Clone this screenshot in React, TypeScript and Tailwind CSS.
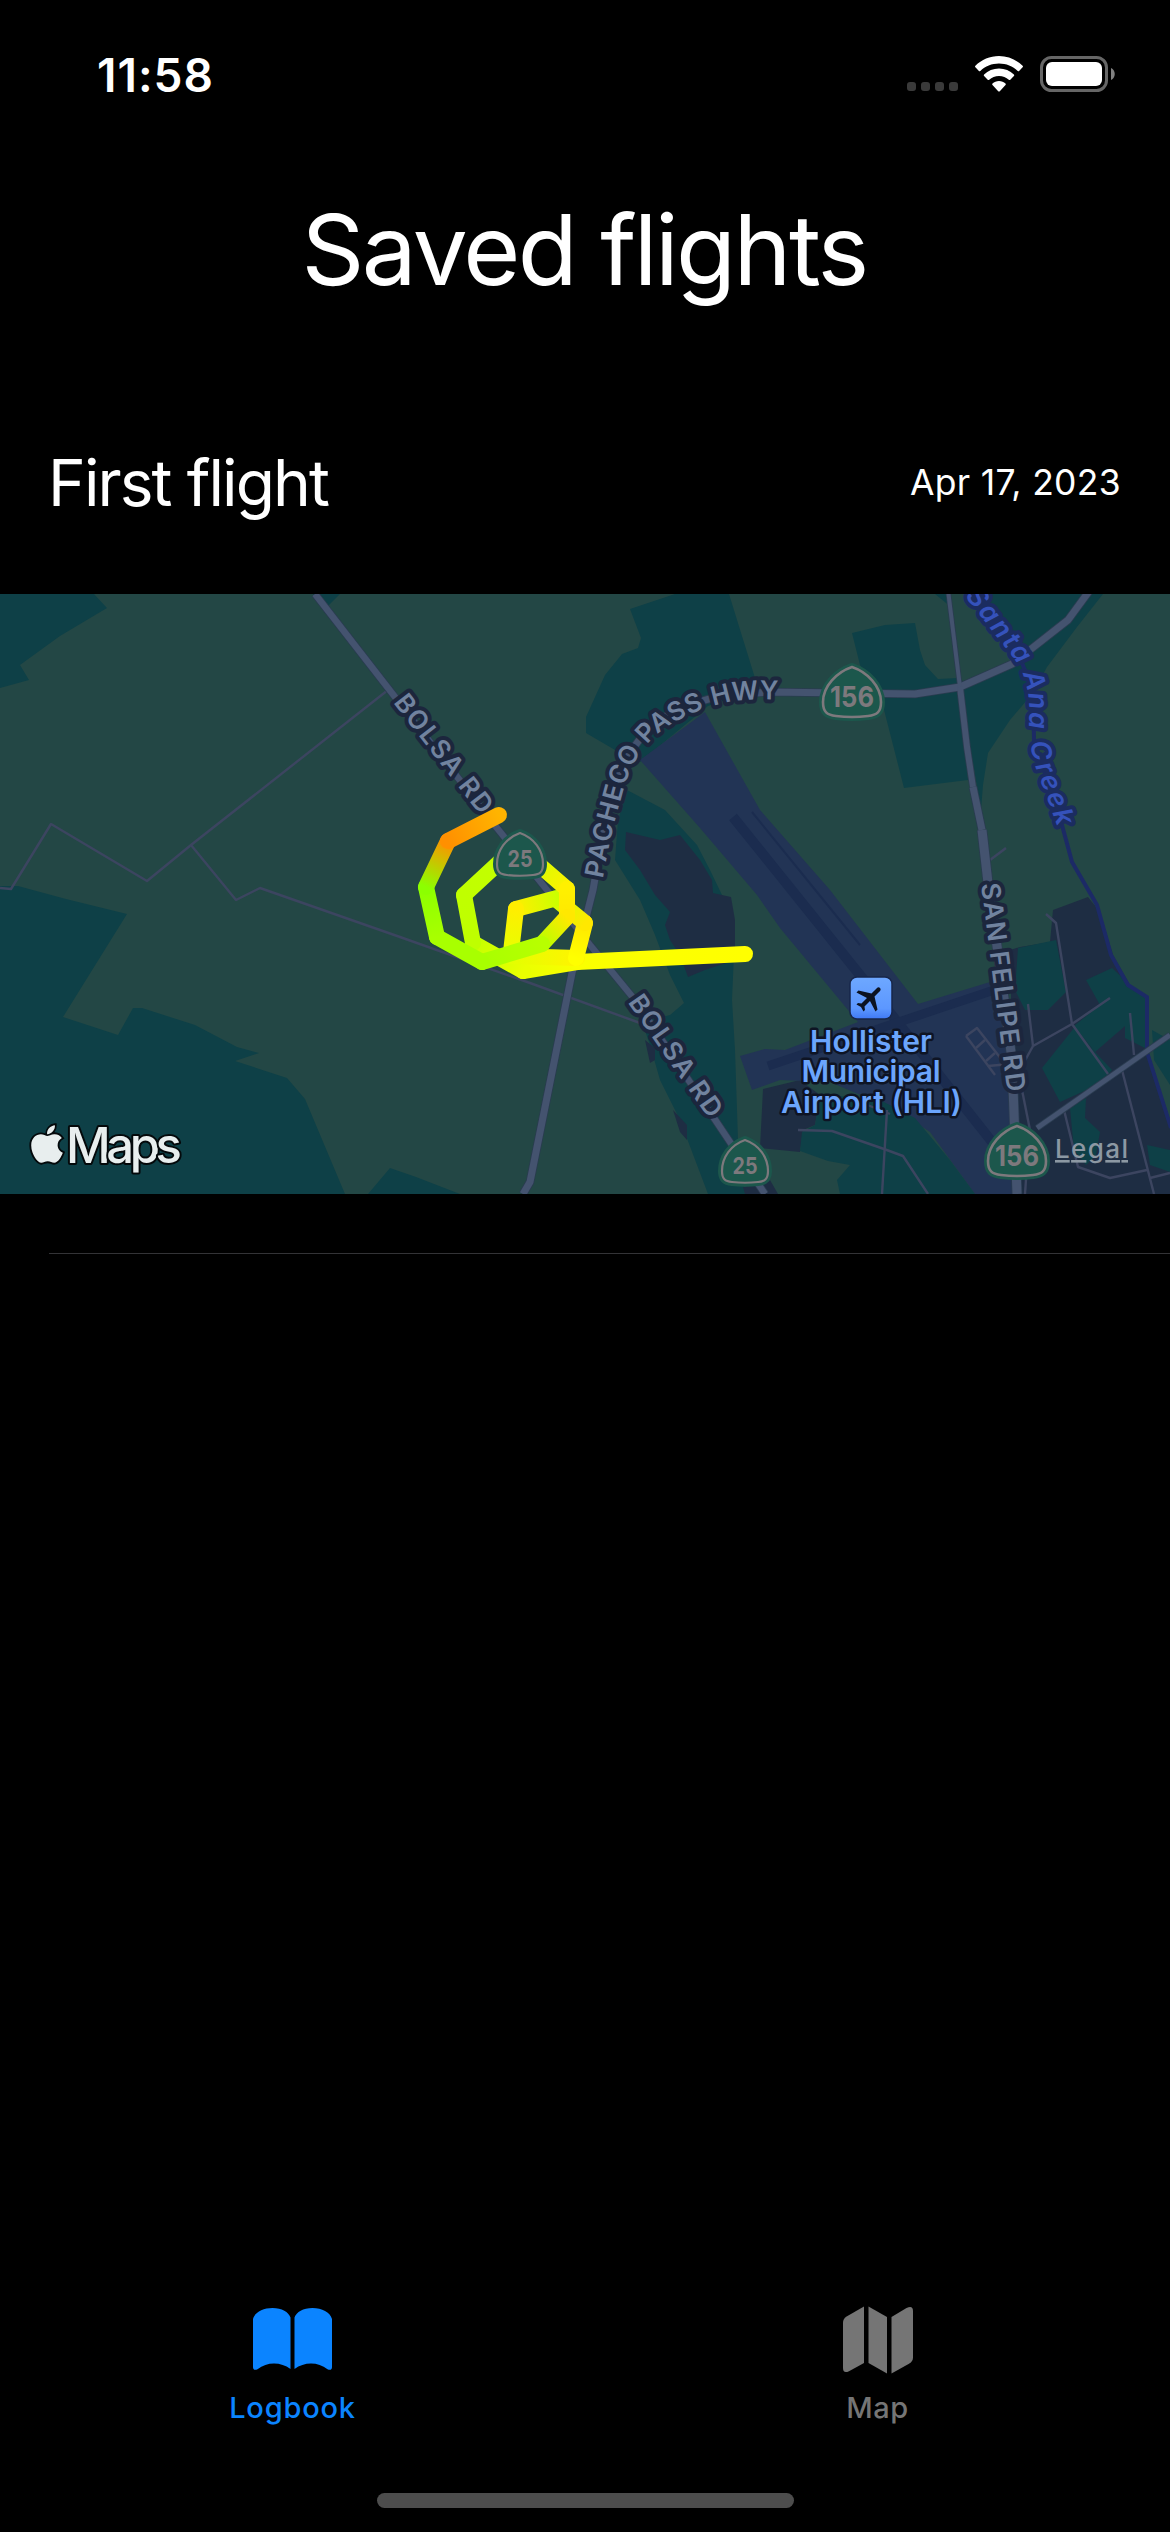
import { FaApple } from "react-icons/fa";
import { MdFlight } from "react-icons/md";

const GREEN = "#234745";
const TEAL = "#0e4047";
const NAVY = "#1e2d43";
const AIRPORT = "#223455";
const RUNWAY = "#1b2c4f";

const tealAreas = [
  "0,594 94,594 107,608 60,636 20,665 29,680 0,688",
  "0,886 18,886 66,899 127,914 63,1017 118,1035 133,1008 142,1008 195,1025 237,1047 259,1053 235,1061 287,1078 305,1099 345,1194 0,1194",
  "313,594 340,594 328,606",
  "368,1194 390,1168 416,1177 460,1194",
  "630,609 675,594 729,594 755,678 755,690 708,706 640,762 615,750 586,733 586,717 605,675 622,654 638,648 641,638",
  "627,790 665,810 697,845 710,870 722,895 735,930 732,1000 735,1050 738,1140 745,1194 708,1194 680,1120 660,1080 650,1045 642,1022 670,1015 684,1003 670,975 655,935 640,900 615,860 618,820",
  "852,633 885,625 915,623 920,650 925,665 938,679 958,678 968,780 904,788 882,702 872,690 860,665",
  "935,594 948,594 951,607",
  "968,594 1103,594 1077,627 1047,667 1033,693 1010,720 988,753 983,785 981,810 960,687 1020,662",
];

const navyAreas = [
  "626,832 660,840 680,835 700,860 712,880 713,893 731,897 735,920 735,960 705,970 688,977 680,955 670,940 665,925 670,912 655,895 640,870 625,850",
  "645,1040 655,1048 655,1060 650,1063",
  "673,1110 687,1125 687,1140 680,1132",
  "743,1187 770,1180 778,1194 745,1194",
  "763,1089 800,1080 820,1095 815,1125 803,1130 800,1152 760,1148",
  "1010,950 1020,947 1050,942 1053,910 1088,897 1100,912 1113,955 1130,985 1147,1000 1147,1050 1170,1120 1170,1194 1015,1194",
];

const tealPatches = [
  "820,1094 880,1100 915,1118 950,1160 975,1194 840,1194 837,1180 850,1165 828,1161 800,1151 802,1132 815,1125",
  "1018,948 1056,940 1066,992 1048,1010 1025,1010 1015,990",
  "1086,980 1112,968 1130,985 1147,998 1145,1048 1125,1038 1125,1026 1095,1052 1074,1026 1100,1005",
  "1074,1028 1095,1052 1112,1070 1100,1084 1060,1102 1042,1068",
  "1070,1108 1086,1098 1085,1118 1100,1132 1096,1155 1086,1165 1074,1150",
  "1152,1030 1170,1040 1170,1085 1154,1060",
  "1147,1145 1170,1150 1170,1172 1150,1165",
];

const lanes = [
  "0,888 11,889 51,824 147,881 191,845 388,690",
  "191,845 236,900 260,888 400,937 530,983 640,1023",
  "990,860 1006,848",
  "798,1130 832,1131 884,1149 903,1156 928,1194",
  "887,1110 882,1194",
  "865,1104 890,1114",
  "966,1036 977,1028 1002,1060",
  "966,1036 995,1075",
  "976,1048 985,1040",
  "986,1061 995,1053",
  "988,1066 1010,1064",
  "1046,914 1056,923 1072,1024 1110,998",
  "1072,1024 1108,1074",
  "1072,1024 1033,1046 1028,1004",
  "1033,1046 1022,1066",
  "1130,1013 1134,1055",
  "1122,1070 1154,1194",
  "1064,1110 1078,1167 1110,1178 1147,1170",
  "1150,1178 1170,1173",
  "1022,1090 1030,1130",
  "1027,1165 1025,1194",
];

const roads: [string, number][] = [
  ["315,594 388,688 497,828 547,890 590,945 635,1000 730,1142 765,1194", 6.5],
  ["523,1194 530,1182 572,973 593,890 597,867 604,832 613,792 621,766 629,754 645,732 662,718 695,703 723,695 770,692 915,694 960,687 1012,664 1068,620 1090,590", 7],
  ["948,590 960,687", 4],
  ["960,687 967,747 973,787", 6],
  ["973,787 982,830", 7],
  ["982,830 988,883 999,960 1012,1060 1017,1194", 9],
  ["1037,1128 1170,1035", 5],
];

type Leg = { from: [number, number]; to: [number, number]; a: string; b: string };

const legs: Leg[] = [
  { from: [745, 954], to: [577, 962], a: "#ffff00", b: "#faff00" },
  { from: [577, 962], to: [523, 971], a: "#faff00", b: "#eaff00" },
  { from: [523, 971], to: [473, 943], a: "#eaff00", b: "#c4ff00" },
  { from: [577, 958], to: [511, 956], a: "#fff400", b: "#e4ff00" },
  { from: [576, 958], to: [585, 923], a: "#ffff00", b: "#ffe800" },
  { from: [585, 923], to: [557, 900], a: "#ffe800", b: "#d4ff00" },
  { from: [557, 898], to: [516, 909], a: "#ccff00", b: "#ffee00" },
  { from: [516, 909], to: [511, 952], a: "#ffee00", b: "#e8ff00" },
  { from: [473, 943], to: [464, 895], a: "#bfff00", b: "#c0ff00" },
  { from: [464, 895], to: [505, 857], a: "#c0ff00", b: "#c4ff00" },
  { from: [505, 857], to: [530, 857], a: "#c4ff00", b: "#ccff00" },
  { from: [530, 857], to: [567, 889], a: "#d0ff00", b: "#fff000" },
  { from: [567, 889], to: [567, 917], a: "#fff000", b: "#ffe800" },
  { from: [567, 917], to: [542, 944], a: "#ffe800", b: "#b8ff00" },
  { from: [542, 944], to: [482, 962], a: "#b8ff00", b: "#a8ff00" },
  { from: [482, 962], to: [437, 937], a: "#a8ff00", b: "#a8ff00" },
  { from: [437, 937], to: [426, 887], a: "#a8ff00", b: "#8cff00" },
  { from: [426, 887], to: [448, 841], a: "#8cff00", b: "#ff9000" },
  { from: [448, 841], to: [499, 815], a: "#ff9000", b: "#ffb400" },
];

type RoadLabel = { id: string; d: string; text: string; length: number; water?: boolean };

const roadLabels: RoadLabel[] = [
  { id: "bolsa-north", d: "M400 697L500 826", text: "BOLSA RD", length: 143 },
  { id: "bolsa-south", d: "M635 997L731 1135", text: "BOLSA RD", length: 143 },
  {
    id: "pacheco",
    d: "M594 877C599 850 605 820 612 798C619 770 627 752 646 732C666 714 690 702 723 694Q750 688 800 692",
    text: "PACHECO PASS HWY",
    length: 299,
  },
  { id: "san-felipe", d: "M990 883L1020 1120", text: "SAN FELIPE RD", length: 210 },
  {
    id: "creek",
    d: "M971 591L1012 643Q1035 668 1037 704L1037 722Q1037 745 1044 767L1073 845",
    text: "Santa Ana Creek",
    length: 258,
    water: true,
  },
];

function Shield({ x, y, wide, label }: { x: number; y: number; wide?: boolean; label: string }) {
  const d = wide
    ? "M0 -23C15 -18 29 -4 29 12C29 22 25 25 16 26Q0 28 -16 26C-25 25 -29 22 -29 12C-29 -4 -15 -18 0 -23Z"
    : "M0 -23C14 -18 23 -6 23 8C23 16 20 18.500 13 19Q0 20.500 -13 19C-20 18.500 -23 16 -23 8C-23 -6 -14 -18 0 -23Z";
  return (
    <g transform={`translate(${x} ${y})`}>
      <path d={d} fill="#1c574c" stroke="#1c574c" strokeWidth={8} strokeLinejoin="round" />
      <path d={d} fill="#1c574c" stroke="#7d797d" strokeWidth={wide ? 2.6 : 2.2} strokeLinejoin="round" />
      <text
        y={wide ? 17 : 11}
        textAnchor="middle"
        fontSize={wide ? 29 : 23.5}
        fontWeight={700}
        fill="#7d797d"
        textLength={wide ? 44 : 25}
        lengthAdjust="spacingAndGlyphs"
      >
        {label}
      </text>
    </g>
  );
}

function FlightMap() {
  return (
    <svg className="block h-[600px] w-full" viewBox="0 594 1170 600" fontFamily="Inter, sans-serif">
      <rect y={594} width={1170} height={600} fill={GREEN} />
      {tealAreas.map((p) => (
        <polygon key={p} points={p} fill={TEAL} />
      ))}
      {navyAreas.map((p) => (
        <polygon key={p} points={p} fill={NAVY} />
      ))}
      <polygon
        points="640,760 705,712 760,810 830,890 918,1004 990,982 1005,988 1022,1194 975,1194 930,1132 900,1112 830,1082 780,1080 752,1090 740,1056 765,1049 785,1050 858,1022 780,928 757,895 700,828"
        fill={AIRPORT}
      />
      {tealPatches.map((p) => (
        <polygon key={p} points={p} fill={TEAL} />
      ))}
      <g fill="none" stroke={RUNWAY}>
        <path d="M733 817L880 1000L1000 1152" strokeWidth={10} />
        <path d="M752 812L860 945" strokeWidth={2} />
        <path d="M768 1066L1000 988" strokeWidth={9} />
      </g>

      <polyline
        points="975,594 1022,663 1033,690 1034,740 1062,825 1072,862 1097,905 1111,955 1128,985 1147,997 1147,1052 1171,1128"
        fill="none"
        stroke="#1c2a66"
        strokeWidth={4}
      />
      <g fill="none" stroke="#3c4560" strokeWidth={2.4} strokeLinejoin="round">
        {lanes.map((p) => (
          <polyline key={p} points={p} />
        ))}
      </g>
      <g fill="none" strokeLinejoin="round">
        {roads.map(([p, w]) => (
          <polyline key={p} points={p} stroke="#2a3c50" strokeWidth={w + 1.6} />
        ))}
        {roads.map(([p, w]) => (
          <polyline key={p} points={p} stroke="#44536f" strokeWidth={w} />
        ))}
      </g>

      {roadLabels.map((l) => (
        <g key={l.id}>
          <path id={l.id} d={l.d} fill="none" />
          <text
            dy={l.water ? 8 : 9}
            fontSize={l.water ? 27 : 26}
            fontWeight={600}
            fontStyle={l.water ? "italic" : "normal"}
            fill={l.water ? "#3552bb" : "#71839f"}
            stroke={l.water ? "#1b2c60" : "#1c263d"}
            strokeWidth={8}
            strokeLinejoin="round"
            paintOrder="stroke"
            textLength={l.length}
          >
            <textPath href={`#${l.id}`}>{l.text}</textPath>
          </text>
        </g>
      ))}

      <g strokeWidth={16} strokeLinecap="round">
        {legs.map((leg, i) => (
          <g key={i}>
            <linearGradient
              id={`leg-${i}`}
              gradientUnits="userSpaceOnUse"
              x1={leg.from[0]}
              y1={leg.from[1]}
              x2={leg.to[0]}
              y2={leg.to[1]}
            >
              <stop offset="0" stopColor={leg.a} />
              <stop offset="1" stopColor={leg.b} />
            </linearGradient>
            <path d={`M${leg.from.join(" ")}L${leg.to.join(" ")}`} stroke={`url(#leg-${i})`} />
          </g>
        ))}
      </g>

      <Shield x={520} y={856} label="25" />
      <Shield x={745} y={1163} label="25" />
      <Shield x={852} y={690} wide label="156" />
      <Shield x={1017} y={1149} wide label="156" />

      <linearGradient id="poi" x2="0" y2="1">
        <stop offset="0" stopColor="#6ea8ff" />
        <stop offset="0.75" stopColor="#5c97ff" />
        <stop offset="1" stopColor="#3f78f5" />
      </linearGradient>
      <rect x={850} y={977} width={42} height={42} rx={7} fill="url(#poi)" stroke="#17264a" strokeWidth={1.5} />
      <g transform="translate(870.500 998.500) rotate(45)">
        <MdFlight x={-17} y={-17} size={34} color="#0c1322" />
      </g>
      <g
        fontSize={30}
        fontWeight={600}
        fill="#6ba5fc"
        stroke="#0e1424"
        strokeWidth={5}
        strokeLinejoin="round"
        paintOrder="stroke"
        textAnchor="middle"
      >
        <text x={871} y={1052} textLength={122}>Hollister</text>
        <text x={871} y={1082} textLength={139}>Municipal</text>
        <text x={871.5} y={1112.5} textLength={181}>Airport (HLI)</text>
      </g>

      <FaApple
        x={25.5}
        y={1122.5}
        size={43}
        overflow="visible"
        fill="#e8eeee"
        stroke="#04090b"
        strokeWidth={44}
        paintOrder="stroke"
      />
      <text
        x={66}
        y={1163}
        fontSize={49}
        fontWeight={500}
        textLength={116}
        fill="#e8eeee"
        stroke="#04090b"
        strokeWidth={4}
        strokeLinejoin="round"
        paintOrder="stroke"
      >
        Maps
      </text>
      <text
        x={1055}
        y={1158}
        fontSize={26}
        fontWeight={500}
        fill="#8c98a3"
        textLength={73}
        textDecoration="underline"
      >
        Legal
      </text>
    </svg>
  );
}

function StatusIcons() {
  return (
    <div className="flex h-9 items-end">
      <div className="mb-px flex gap-[5px]">
        {[0, 1, 2, 3].map((i) => (
          <span key={i} className="size-[9px] rounded-[3px] bg-[#3a3a3a]" />
        ))}
      </div>
      <svg className="ml-[17px] h-9 w-12" viewBox="0 0 48 36" fill="#fff">
        <path d="M24 0C33 0 41.500 3.700 47.600 9.700Q48.400 10.500 47.600 11.300L44.100 14.900Q43.400 15.600 42.700 14.900C37.800 10.200 31.200 7.500 24 7.500S10.200 10.200 5.300 14.900Q4.600 15.600 3.900 14.900L.4 11.300Q-.4 10.500 .4 9.700C6.500 3.700 15 0 24 0Z" />
        <path d="M24 12.500C29.800 12.500 35 14.800 38.900 18.500Q39.700 19.300 38.900 20.100L35.300 23.700Q34.600 24.400 33.800 23.700C31.200 21.400 27.800 20 24 20S16.800 21.400 14.200 23.700Q13.400 24.400 12.700 23.700L9.100 20.100Q8.300 19.300 9.100 18.500C13 14.800 18.200 12.500 24 12.500Z" />
        <path d="M24 25C26.500 25 28.800 25.900 30.500 27.400Q31.300 28.200 30.500 29L24.800 35.200Q24 36 23.200 35.200L17.500 29Q16.700 28.200 17.500 27.400C19.200 25.900 21.500 25 24 25Z" />
      </svg>
      <svg className="ml-[17px] h-9 w-[75px]" viewBox="0 0 75 36">
        <rect x={1.5} y={1.5} width={65} height={33} rx={10} fill="none" stroke="#666" strokeWidth={3} />
        <rect x={6} y={6} width={56} height={24} rx={6} fill="#fff" />
        <path d="M71 12C76 14 76 22 71 24Z" fill="#808080" />
      </svg>
    </div>
  );
}

function BookIcon() {
  return (
    <svg className="h-[62px] w-[79px]" viewBox="0 0 79 62" fill="currentColor">
      <path d="M0 11C2 4 10 0 19.500 0S35.500 4 37.500 9.500V61Q30 55.500 21 55.500Q12 55.500 4.500 61.300Q0 63 0 59Z" />
      <path d="M79 11C77 4 69 0 59.500 0S43.500 4 41.500 9.500V61Q49 55.500 58 55.500Q67 55.500 74.500 61.300Q79 63 79 59Z" />
    </svg>
  );
}

function MapIcon() {
  return (
    <svg className="-mt-0.5 h-[68px] w-[70px]" viewBox="0 0 70 68" fill="currentColor">
      <path d="M0 16.500Q0 12.500 4 10.200L21 .5V57L6 65.200Q0 68 0 62Z" />
      <path d="M25.500 .5L44 11V67.500L25.500 57Z" />
      <path d="M48.500 11L63.500 2Q70 -1 70 5V51.500Q70 55.500 66 57.800L48.500 67.500Z" />
    </svg>
  );
}

export default function App() {
  return (
    <div className="flex h-[2532px] w-[1170px] flex-col overflow-hidden bg-black font-['Inter',sans-serif] text-white">
      <header className="flex h-[148px] items-start justify-between pt-[56px] pr-[55px] pl-[97px]">
        <span className="mt-[-9px] text-[46px] leading-[56px] font-semibold tracking-[1px]">11:58</span>
        <StatusIcons />
      </header>

      <h1 className="mt-[40px] pr-0.5 text-center text-[98px] leading-[124px] tracking-[-2.6px]">Saved flights</h1>

      <main className="mt-[131px] flex-1">
        <div className="flex h-[80px] items-center justify-between pr-[49px] pl-[48px]">
          <h2 className="text-[64px] leading-[80px] tracking-[-1.9px]">First flight</h2>
          <time className="text-[35.5px] leading-[48px] tracking-[0.3px]">Apr 17, 2023</time>
        </div>
        <div className="mt-[71px]">
          <FlightMap />
        </div>
        <div className="mt-[59px] ml-[49px] h-px bg-[#333336]" />
      </main>

      <nav className="grid h-[185px] grid-cols-2">
        <a className="flex flex-col items-center text-[#0b84ff]">
          <BookIcon />
          <span className="mt-5 text-[29px] leading-9 font-medium tracking-[0.8px]">Logbook</span>
        </a>
        <a className="flex flex-col items-center text-[#757575]">
          <MapIcon />
          <span className="mt-4 text-[29px] leading-9 font-medium tracking-[0.6px]">Map</span>
        </a>
      </nav>
      <div className="mx-auto mb-6 h-[15px] w-[417px] shrink-0 rounded-full bg-[#4d4d4d]" />
    </div>
  );
}
